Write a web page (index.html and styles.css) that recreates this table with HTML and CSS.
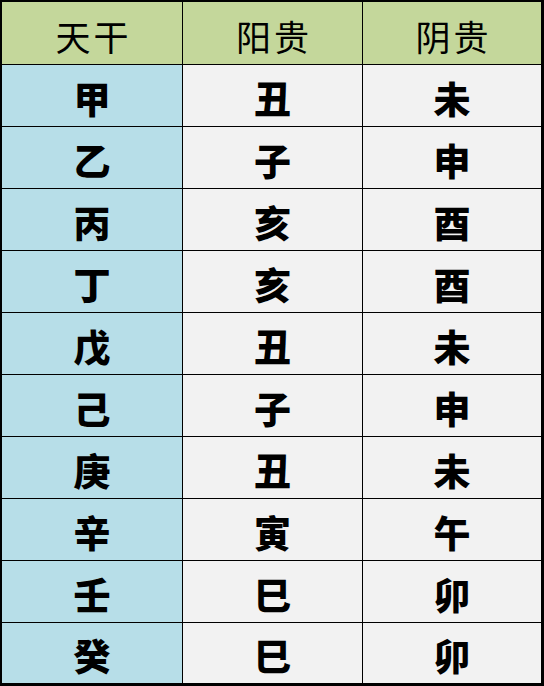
FILE: index.html
```html
<!DOCTYPE html>
<html lang="zh">
<head>
<meta charset="utf-8">
<link rel="stylesheet" href="styles.css">
</head>
<body>
<div class="table">
  <div class="cell head">天干</div><div class="cell head">阳贵</div><div class="cell head">阴贵</div>
  <div class="cell stem">甲</div><div class="cell val">丑</div><div class="cell val">未</div>
  <div class="cell stem">乙</div><div class="cell val">子</div><div class="cell val">申</div>
  <div class="cell stem">丙</div><div class="cell val">亥</div><div class="cell val">酉</div>
  <div class="cell stem">丁</div><div class="cell val">亥</div><div class="cell val">酉</div>
  <div class="cell stem">戊</div><div class="cell val">丑</div><div class="cell val">未</div>
  <div class="cell stem">己</div><div class="cell val">子</div><div class="cell val">申</div>
  <div class="cell stem">庚</div><div class="cell val">丑</div><div class="cell val">未</div>
  <div class="cell stem">辛</div><div class="cell val">寅</div><div class="cell val">午</div>
  <div class="cell stem">壬</div><div class="cell val">巳</div><div class="cell val">卯</div>
  <div class="cell stem">癸</div><div class="cell val">巳</div><div class="cell val">卯</div>
</div>
</body>
</html>
```
FILE: styles.css
```css
html, body {
  margin: 0;
  padding: 0;
  background: #ffffff;
}
.table {
  display: grid;
  grid-template-columns: 180px 179px 178px;
  grid-template-rows: 62px repeat(9, 61px) 60px;
  gap: 1px;
  padding: 2px 3px 3px 2px;
  background: #000000;
  width: 544px;
  height: 686px;
  box-sizing: border-box;
}
.cell {
  display: flex;
  align-items: center;
  justify-content: center;
  color: #000000;
  font-family: "Noto Sans CJK SC", sans-serif;
  padding-top: 4px;
  box-sizing: border-box;
}
.head {
  background: #c4d79b;
  font-size: 35px;
  font-weight: 400;
  letter-spacing: 3px;
  padding-left: 3px;
}
.stem {
  background: #b7dee8;
  font-size: 37px;
  font-weight: 900;
}
.val {
  background: #f2f2f2;
  font-size: 37px;
  font-weight: 900;
}
```
